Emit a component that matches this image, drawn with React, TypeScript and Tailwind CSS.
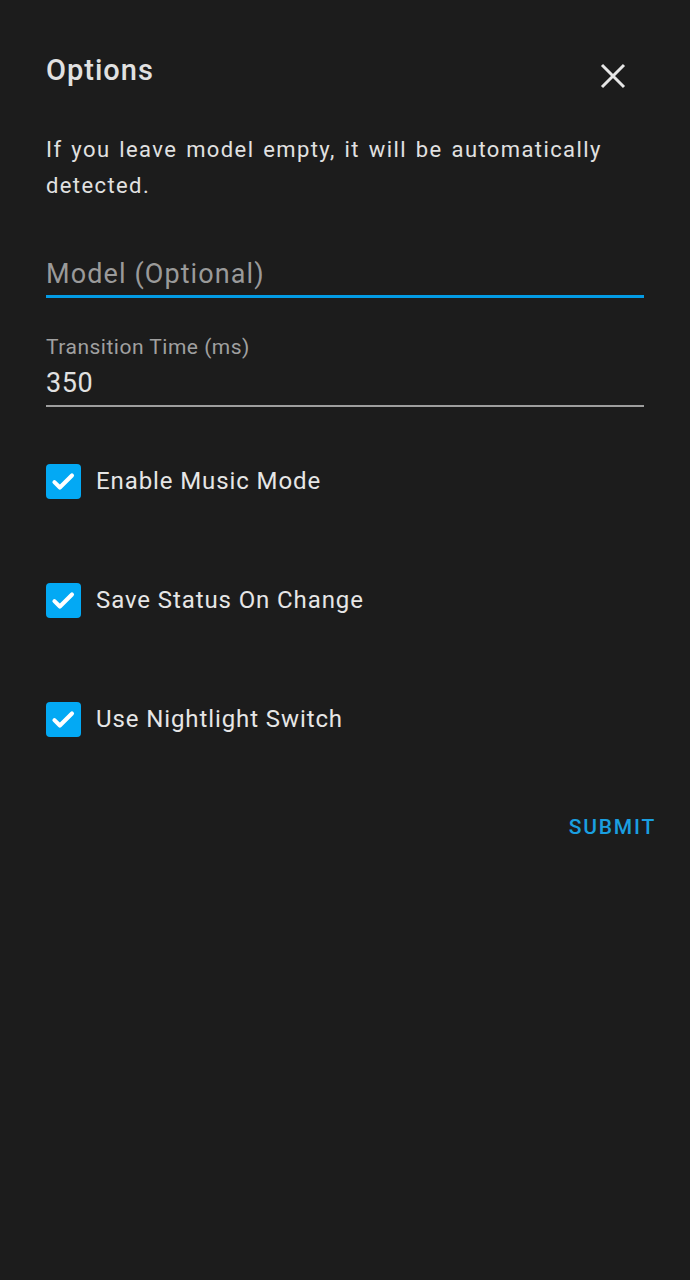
import React from 'react';

const options = ['Enable Music Mode', 'Save Status On Change', 'Use Nightlight Switch'];

function Check() {
  return (
    <div className="flex h-[35px] w-[35px] shrink-0 items-center justify-center rounded-[4px] bg-[#03a9f4]">
      <svg width="29" height="29" viewBox="0 0 24 24" fill="none">
        <path d="M4.5 12.5l4.5 4.5 10-10" stroke="#ffffff" strokeWidth="3.4" strokeLinecap="round" strokeLinejoin="round" />
      </svg>
    </div>
  );
}

export default function App() {
  return (
    <div className="min-h-[1280px] w-full bg-[#1c1c1c] text-[#e1e1e1]" style={{ fontFamily: 'Roboto, "Noto Sans", sans-serif' }}>
      <div className="pl-[46px] pr-[34px] pt-[52px]">
        {/* Header */}
        <div className="flex items-start justify-between">
          <h2 className="text-[29px] font-medium leading-[36px] tracking-[1px]">Options</h2>
          <button className="mt-[11px] mr-[30px] flex h-[26px] w-[26px] items-center justify-center">
            <svg width="26" height="26" viewBox="0 0 26 26" fill="none">
              <path d="M2 2l22 22M24 2L2 24" stroke="#e6e6e6" strokeWidth="3" />
            </svg>
          </button>
        </div>

        <p className="mt-[43px] pr-[12px] text-[22px] leading-[36px] tracking-[1.4px] [word-spacing:2px]">
          If you leave model empty, it will be automatically detected.
        </p>

        {/* Model field */}
        <div className="mt-[54px] mr-[12px] border-b-[3px] border-[#039be5] pb-[5px]">
          <div className="text-[27px] leading-[32px] tracking-[1.1px] text-[#9a9a9a]">Model (Optional)</div>
        </div>

        {/* Transition time */}
        <div className="mt-[37px] mr-[12px] border-b-2 border-[#9e9e9e] pb-[6px]">
          <div className="text-[21px] leading-[24px] tracking-[0.5px] text-[#a0a0a0]">Transition Time (ms)</div>
          <div className="mt-[8px] text-[27px] leading-[32px] tracking-[0.6px]">350</div>
        </div>

        {/* Checkboxes */}
        <div className="mt-[57px] flex flex-col gap-[84px]">
          {options.map((o) => (
            <div key={o} className="flex items-center gap-[15px]">
              <Check />
              <span className="text-[24px] leading-[35px] tracking-[0.9px] text-[#e6e6e6]">{o}</span>
            </div>
          ))}
        </div>

        <div className="mt-[78px] flex justify-end">
          <button className="text-[21px] font-medium leading-[24px] tracking-[1.8px] text-[#1a9fe0]">SUBMIT</button>
        </div>
      </div>
    </div>
  );
}
